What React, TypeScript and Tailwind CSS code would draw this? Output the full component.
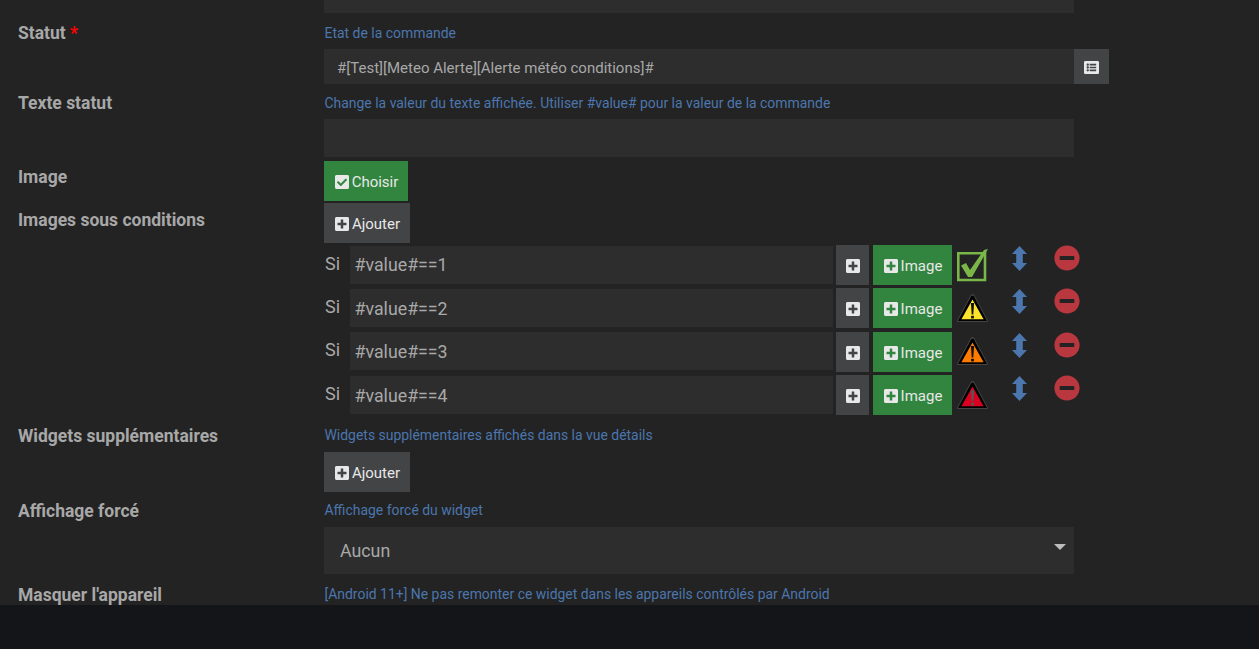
import React from 'react';
import { FaPlusSquare, FaCheckSquare, FaListAlt, FaMinusCircle } from 'react-icons/fa';

interface RowProps {
  label: string;
  required?: boolean;
  className?: string;
  labelClassName?: string;
  children: React.ReactNode;
}

function Row({ label, required, className = '', labelClassName = '', children }: RowProps) {
  return (
    <div className={`flex ${className}`}>
      <label className={`w-[324px] shrink-0 pl-[18px] text-[17.5px] leading-[18px] font-bold text-[#a8a8a8] ${labelClassName}`}>
        {label}
        {required && <span className="text-[#ff0000]"> *</span>}
      </label>
      <div className="flex-1 min-w-0">{children}</div>
    </div>
  );
}

function Help({ children }: { children: React.ReactNode }) {
  return <div className="h-[18px] pl-[0.5px] text-[13.95px] leading-[18px] text-[#4b76ae]">{children}</div>;
}

function Warning({ fill, mark }: { fill: string; mark: string }) {
  return (
    <svg width="31" height="28" viewBox="0 0 31 28">
      <path d="M13.6 1.2 Q15.5 -1 17.4 1.2 L31 26.8 Q31 28 29.8 28 H1.2 Q0 28 0 26.8 Z" fill="#444" />
      <path d="M14 2.4 Q15.5 0.6 17 2.4 L29.8 26.4 Q29.8 27 29 27 H2 Q1.2 27 1.2 26.4 Z" fill="#000" />
      <path d="M15.5 5.5 L26.6 25.2 H4.4 Z" fill={fill} />
      <path d="M13.9 9 H17.1 L16.3 20.5 H14.7 Z" fill={mark} />
      <rect x="14.1" y="21.8" width="2.8" height="2.6" fill={mark} />
    </svg>
  );
}

function CheckBadge() {
  return (
    <svg width="32" height="34" viewBox="0 0 32 34">
      <path d="M1.3 4.3 H28 V31 H1.3 Z" fill="none" stroke="#7ab648" strokeWidth="2.6" />
      <path d="M4 16.5 L9 14 L13 21 L27 1 L31 0 L15 28 H11 Z" fill="#7ab648" />
    </svg>
  );
}

function MoveArrows() {
  return (
    <svg width="15" height="25" viewBox="0 0 15 25" className="ml-0 mt-[1px] shrink-0">
      <path d="M7.5 0 L15 8 H10.8 V17 H15 L7.5 25 L0 17 H4.2 V8 H0 Z" fill="#4b76ae" />
    </svg>
  );
}

const conditions = [
  { value: '#value#==1', top: 'mt-[2px]', field: 'mt-px pb-[2px]', si: 'leading-[38px]', pad: 'pt-[4px]', icon: <CheckBadge /> },
  { value: '#value#==2', top: 'mt-[3px]', field: 'mt-px', si: 'leading-[38px]', pad: 'pt-[6px]', icon: <Warning fill="#fbe32c" mark="#111" /> },
  { value: '#value#==3', top: 'mt-[4px]', field: 'mt-0', si: 'leading-[36px]', pad: 'pt-[5px]', icon: <Warning fill="#ff7b00" mark="#111" /> },
  { value: '#value#==4', top: 'mt-[3px]', field: 'mt-px', si: 'leading-[38px]', pad: 'pt-[6px]', icon: <Warning fill="#dc0020" mark="#555" /> },
];

const inputClass = 'bg-[#2d2d2d] text-[#a8a8a8] outline-none';
const greyBtn = 'flex items-center justify-center pt-[2px] bg-[#434446] text-[#e8e8e8] text-[15px]';
const greenBtn = 'flex items-center justify-center pt-[2px] bg-[#32853f] text-[#e8e8e8] text-[15px]';

export default function App() {
  return (
    <div className="flex flex-col h-[649px] overflow-hidden bg-[#232323] font-['Roboto',sans-serif]">
      <main className="h-[605px] shrink-0 overflow-hidden">
        <div className="ml-[324px] w-[750px] h-[13px] bg-[#2d2d2d]" />

        <Row label="Statut" required className="mt-[11px]">
          <Help>Etat de la commande</Help>
          <div className="flex mt-[7px]">
            <input
              readOnly
              value="#[Test][Meteo Alerte][Alerte météo conditions]#"
              className={`${inputClass} w-[750px] h-[35px] px-[13px] pt-[2px] text-[15px]`}
            />
            <button className={`${greyBtn} w-[35px] h-[35px]`}>
              <FaListAlt size={15} />
            </button>
          </div>
        </Row>

        <Row label="Texte statut" className="mt-[10px]">
          <Help>Change la valeur du texte affichée. Utiliser #value# pour la valeur de la commande</Help>
          <input readOnly className={`${inputClass} block w-[750px] h-[38px] mt-[7px]`} />
        </Row>

        <Row label="Image" className="mt-[4px]" labelClassName="pt-[7px]">
          <button className={`${greenBtn} w-[84px] h-[40px] gap-[2px]`}>
            <FaCheckSquare size={16} />
            Choisir
          </button>
        </Row>

        <Row label="Images sous conditions" className="mt-[2px]" labelClassName="pt-[8px]">
          <button className={`${greyBtn} w-[86px] h-[40px] gap-[2px]`}>
            <FaPlusSquare size={16} />
            Ajouter
          </button>
          {conditions.map((c) => (
            <div key={c.value} className={`flex h-[40px] ${c.top}`}>
              <span className={`w-[26px] pl-px text-[18px] text-[#a8a8a8] ${c.si}`}>Si</span>
              <input
                readOnly
                value={c.value}
                className={`${inputClass} w-[483px] h-[38px] px-[4.5px] text-[17.8px] ${c.field}`}
              />
              <button className={`${greyBtn} w-[33px] h-[40px] ml-[3px]`}>
                <FaPlusSquare size={16} />
              </button>
              <button className={`${greenBtn} w-[79px] h-[40px] ml-[4px] gap-[2px]`}>
                <FaPlusSquare size={16} />
                Image
              </button>
              <div className={`w-[60px] pl-[5px] ${c.pad}`}>{c.icon}</div>
              <MoveArrows />
              <FaMinusCircle size={26} className="ml-[27px] text-[#b9383f]" />
            </div>
          ))}
        </Row>

        <Row label="Widgets supplémentaires" className="mt-[11px]" labelClassName="pt-px">
          <Help>Widgets supplémentaires affichés dans la vue détails</Help>
          <button className={`${greyBtn} w-[86px] h-[40px] gap-[2px] mt-[8px]`}>
            <FaPlusSquare size={16} />
            Ajouter
          </button>
        </Row>

        <Row label="Affichage forcé" className="mt-[9px]" labelClassName="pt-px">
          <Help>Affichage forcé du widget</Help>
          <div className="relative w-[750px] mt-[8px]">
            <select className={`${inputClass} block w-full h-[47px] pl-[16px] pt-[2px] text-[17.8px] appearance-none`}>
              <option>Aucun</option>
            </select>
            <span className="absolute right-[8px] top-[17px] border-x-[6px] border-t-[6px] border-x-transparent border-t-[#bdbdbd]" />
          </div>
        </Row>

        <Row label="Masquer l'appareil" className="mt-[11px]" labelClassName="pt-px">
          <Help>[Android 11+] Ne pas remonter ce widget dans les appareils contrôlés par Android</Help>
        </Row>
      </main>
      <footer className="flex-1 bg-[#141518]" />
    </div>
  );
}
